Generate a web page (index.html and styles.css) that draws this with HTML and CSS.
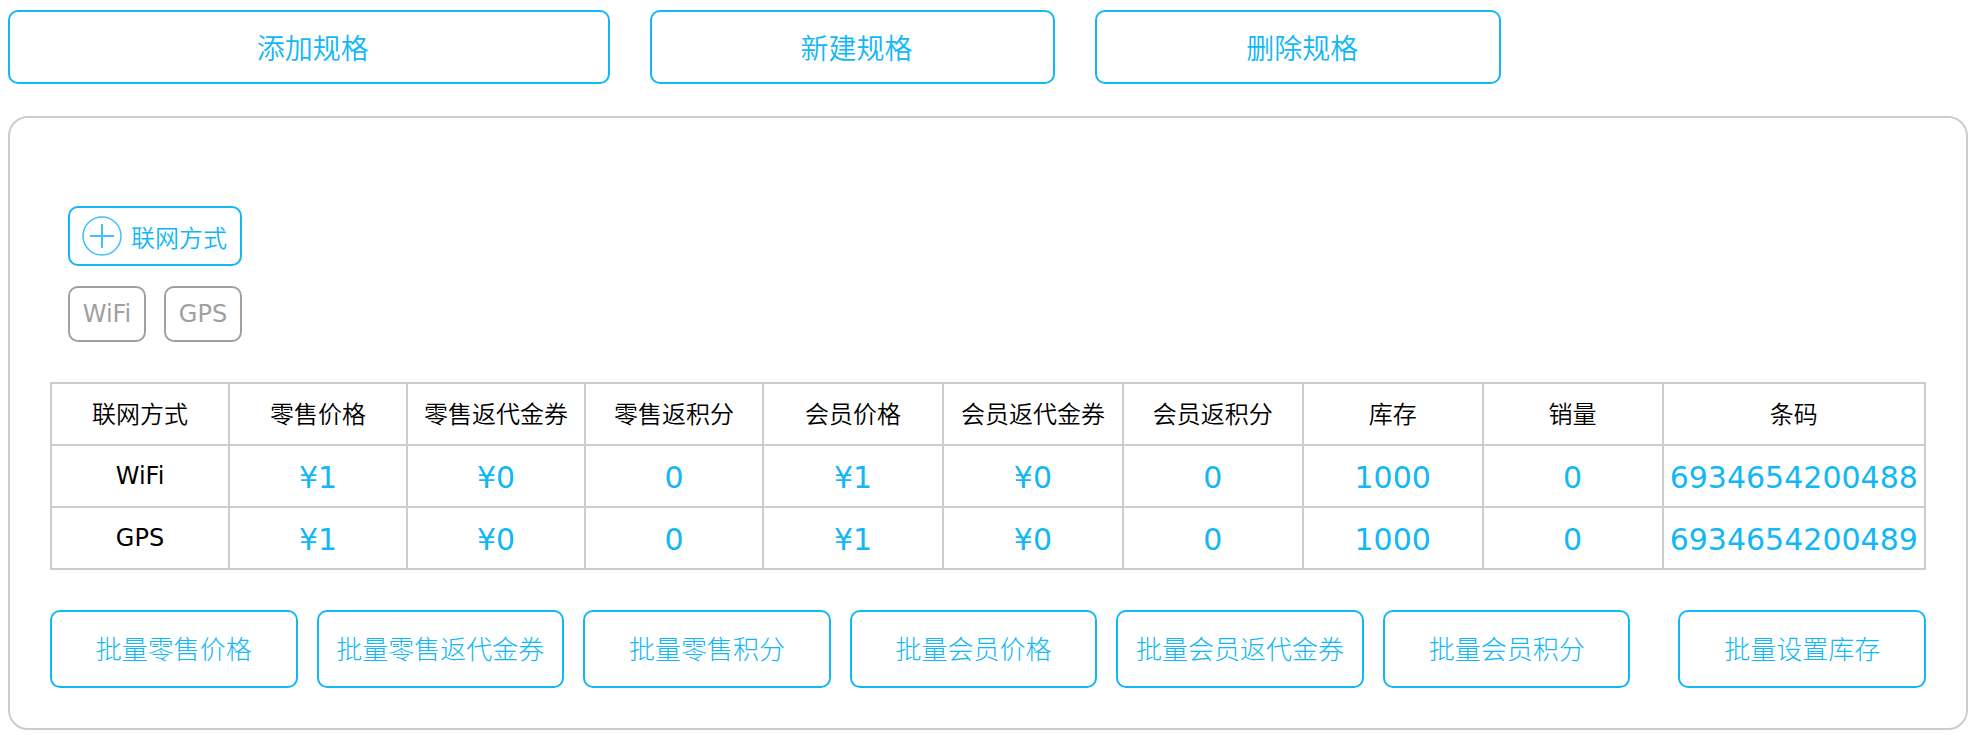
FILE: index.html
```html
<!DOCTYPE html>
<html lang="zh-CN">
<head>
  <meta charset="UTF-8">
  <meta name="viewport" content="width=device-width, initial-scale=1.0">
  <title>商品规格</title>
  <link rel="stylesheet" href="styles.css">
</head>
<body>

  <div class="toolbar">
    <button type="button" class="btn btn-add">添加规格</button>
    <button type="button" class="btn">新建规格</button>
    <button type="button" class="btn">删除规格</button>
  </div>

  <div class="panel">
    <div class="spec">
      <button type="button" class="btn spec-name">
        <svg class="icon-plus" width="40" height="40" viewBox="0 0 40 40" fill="none" stroke="currentColor" aria-hidden="true">
          <circle cx="20" cy="20" r="19" stroke-width="1.5"/>
          <path d="M20 8v24M8 20h24" stroke-width="2"/>
        </svg>
        联网方式
      </button>
      <div class="spec-values">
        <button type="button" class="tag">WiFi</button>
        <button type="button" class="tag">GPS</button>
      </div>
    </div>

    <table class="sku-table">
      <colgroup>
        <col class="col-retail" span="4">
        <col class="col-member" span="5">
        <col>
      </colgroup>
      <thead>
        <tr>
          <th>联网方式</th>
          <th>零售价格</th>
          <th>零售返代金券</th>
          <th>零售返积分</th>
          <th>会员价格</th>
          <th>会员返代金券</th>
          <th>会员返积分</th>
          <th>库存</th>
          <th>销量</th>
          <th>条码</th>
        </tr>
      </thead>
      <tbody>
        <tr>
          <td class="name">WiFi</td>
          <td>¥1</td>
          <td>¥0</td>
          <td>0</td>
          <td>¥1</td>
          <td>¥0</td>
          <td>0</td>
          <td>1000</td>
          <td>0</td>
          <td>6934654200488</td>
        </tr>
        <tr>
          <td class="name">GPS</td>
          <td>¥1</td>
          <td>¥0</td>
          <td>0</td>
          <td>¥1</td>
          <td>¥0</td>
          <td>0</td>
          <td>1000</td>
          <td>0</td>
          <td>6934654200489</td>
        </tr>
      </tbody>
    </table>

    <div class="batch">
      <button type="button" class="btn">批量零售价格</button>
      <button type="button" class="btn">批量零售返代金券</button>
      <button type="button" class="btn">批量零售积分</button>
      <button type="button" class="btn">批量会员价格</button>
      <button type="button" class="btn">批量会员返代金券</button>
      <button type="button" class="btn">批量会员积分</button>
      <button type="button" class="btn btn-stock">批量设置库存</button>
    </div>
  </div>

</body>
</html>
```
FILE: styles.css
```css
* {
  box-sizing: border-box;
}

body {
  margin: 10px 18px 22px 8px;
  background: #fff;
  color: #000;
  font-family: Verdana, "DejaVu Sans", "Noto Sans CJK SC", sans-serif;
}

button {
  margin: 0;
  padding: 0;
  background: #fff;
  cursor: pointer;
}

.btn {
  border: 2px solid #12b7f5;
  border-radius: 10px;
  color: #12b7f5;
  font-family: "Noto Sans CJK SC", sans-serif;
  font-weight: 350;
  white-space: nowrap;
}

/* 顶部按钮 */
.toolbar {
  display: flex;
  gap: 40px;
  margin-bottom: 32px;
}

.toolbar .btn {
  width: 20.7%;
  height: 74px;
  padding-left: 8px;
  font-size: 28px;
}

.toolbar .btn-add {
  width: 30.7%;
}

.panel {
  padding: 88px 40px 40px;
  border: 2px solid #ccc;
  border-radius: 20px;
}

/* 规格名和规格值 */
.spec {
  margin: 0 18px 40px;
}

.spec-name {
  display: flex;
  align-items: center;
  gap: 9px;
  height: 60px;
  margin-bottom: 20px;
  padding: 0 13px 0 12px;
  font-size: 24px;
}

.icon-plus {
  color: #40c0ff;
}

.spec-values {
  display: flex;
  gap: 18px;
}

.tag {
  width: 78px;
  height: 56px;
  border: 2px solid #a0a0a0;
  border-radius: 10px;
  color: #a0a0a0;
  font-family: Verdana, "DejaVu Sans", sans-serif;
  font-size: 24px;
}

/* 规格表 */
.sku-table {
  width: 100%;
  table-layout: fixed;
  border-collapse: collapse;
  margin-bottom: 40px;
}

.col-retail {
  width: 9.5%;
}

.col-member {
  width: 9.6%;
}

.sku-table th,
.sku-table td {
  height: 62px;
  padding: 0;
  border: 2px solid #ccc;
  text-align: center;
  line-height: 40px;
  white-space: nowrap;
}

.sku-table th {
  padding-bottom: 2px;
  font-family: "Noto Sans CJK SC", sans-serif;
  font-size: 24px;
  font-weight: 350;
}

.sku-table td {
  padding-top: 4px;
  color: #12b7f5;
  font-size: 30px;
}

.sku-table .name {
  padding-top: 0;
  color: #000;
  font-size: 24px;
}

/* 批量设置 */
.batch {
  display: flex;
  gap: 19px;
}

.batch .btn {
  flex: 1;
  height: 78px;
  padding-bottom: 4px;
  font-size: 26px;
  font-weight: 300;
}

.batch .btn-stock {
  margin-left: 29px;
}
```
